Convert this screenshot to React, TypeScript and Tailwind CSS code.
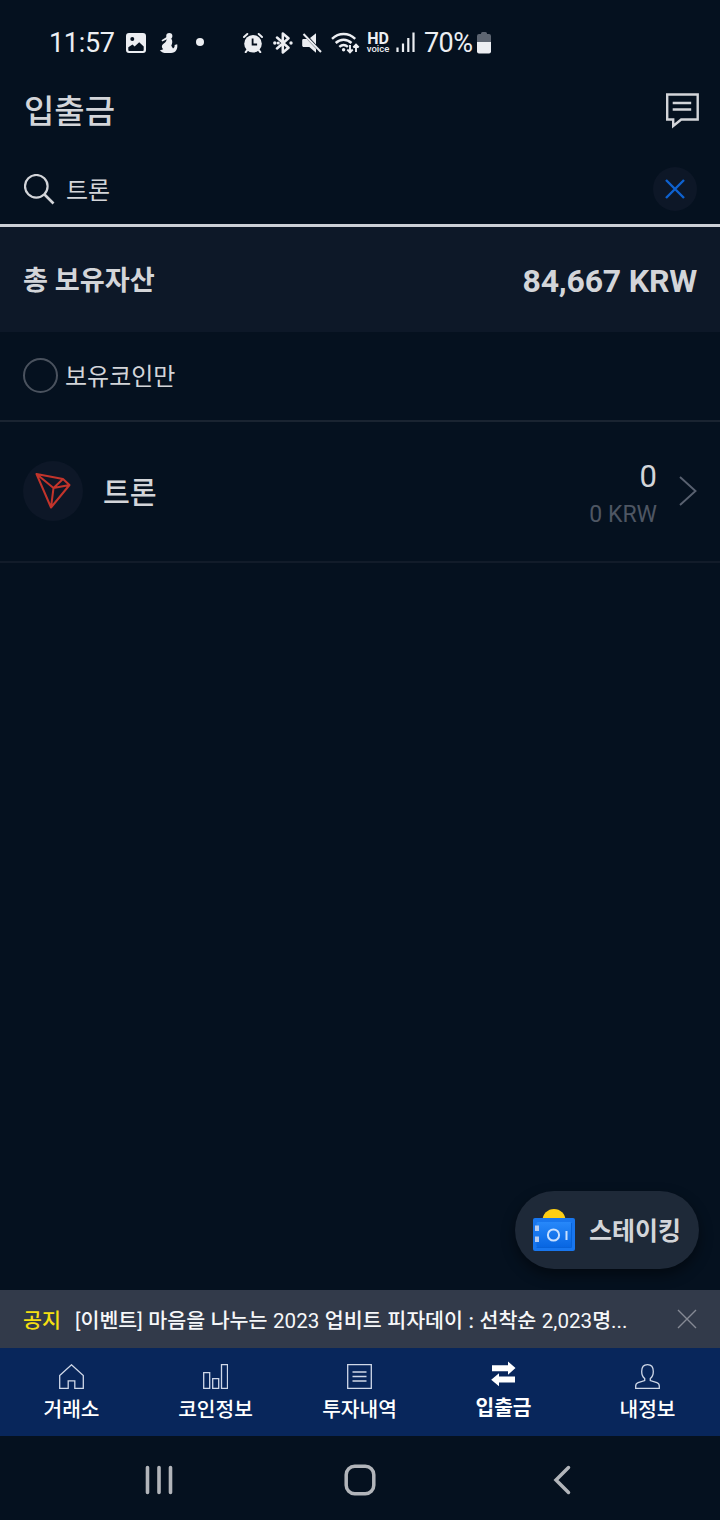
import type { ReactNode } from "react";

type IconProps = { box: string; className: string; children: ReactNode };

function Icon({ box, className, children }: IconProps) {
  return (
    <svg viewBox={box} className={`shrink-0 ${className}`} fill="none" stroke="currentColor" aria-hidden="true">
      {children}
    </svg>
  );
}

function StatusBar() {
  return (
    <div className="flex h-[83px] items-center pl-[49px] text-[#eceef2]">
      <span className="w-[76px] pt-[3px] text-[27px] leading-none tracking-[-0.3px]">11:57</span>
      <Icon box="0 0 20 20" className="ml-px mt-[2px] h-5 w-5">
        <path fill="currentColor" stroke="none" fillRule="evenodd" d="M3 0h14a3 3 0 0 1 3 3v14a3 3 0 0 1-3 3H3a3 3 0 0 1-3-3V3a3 3 0 0 1 3-3ZM2.300 14.300V17c0 .6.3.9.9.9h13.600c.6 0 .9-.3.9-.9v-3.500l-4.500-4.300-4.600 4.200-2.100-1.900-4.200 2.800ZM6.300 4a2 2 0 1 0 0 4 2 2 0 0 0 0-4Z" />
      </Icon>
      <Icon box="0 0 20 22" className="ml-[13px] mt-[2px] h-[22px] w-5">
        <g fill="currentColor" stroke="none">
          <circle cx="10.300" cy="4" r="3.100" />
          <path d="M2.500 8.300 8 4.800l1 1.900-5.700 2.700Z" />
          <path d="M7.800 6.500h4.400c1.600 2.600 1.300 4.600.1 7.200l1.700 2.800c1.500-.8 1.800-2 1.600-3.500l2.600-.8c.8 4.600-1.300 8.800-6.200 8.800H7.500c-2.800 0-5-.9-6.700-2.600l3.400-1.200c-1.700-1.600-1.700-3.400-.5-4.700 1.400-1.400 3.700-2 4.100-6Z" />
        </g>
      </Icon>
      <span className="ml-[17px] mt-px h-2 w-2 rounded-full bg-current" />
      <Icon box="0 0 20 20" className="ml-[39px] mt-[2px] h-5 w-5">
        <circle cx="10" cy="10.8" r="8.8" fill="currentColor" stroke="none" />
        <path d="m1 4 3.3-3M19 4l-3.3-3M4.2 17.2l-1.5 2M15.8 17.2l1.5 2" strokeWidth="2" strokeLinecap="round" />
        <path d="M9.6 5.5v6h4.5" stroke="#050f1d" strokeWidth="1.8" />
      </Icon>
      <Icon box="0 0 20 22" className="ml-[10px] mt-[2px] h-[22px] w-5">
        <path d="m4 5.500 11.500 10.300-5.700 4.700v-19l5.700 4.700L4 16.500" strokeWidth="2.500" strokeLinejoin="round" strokeLinecap="round" />
        <g fill="currentColor" stroke="none"><circle cx="1.800" cy="11" r="1.700" /><circle cx="18" cy="11" r="1.700" /><circle cx="5.200" cy="11" r="1.600" /></g>
      </Icon>
      <Icon box="0 0 20 20" className="ml-[9px] mt-[2px] h-5 w-5">
        <path fill="currentColor" stroke="none" d="M14 .2v11.2L8 5.1ZM1.8 6.1h3L14 15.8v4L7.3 14H1.8C.8 14 .2 13.4.2 12.5v-5c0-.9.6-1.4 1.6-1.4Z" />
        <path d="m1.5 1 17.5 18" strokeWidth="2" />
      </Icon>
      <Icon box="0 0 29 22" className="ml-[9px] mt-[2px] h-[22px] w-[29px]">
        <path d="M1 6.8c6.800-6.400 16.400-6.400 23.200 0M4.700 11c4.700-4.400 11.100-4.400 15.800 0M8.300 14.900c2.700-2.400 5.900-2.400 8.600 0" strokeWidth="2.400" />
        <circle cx="12.600" cy="17.800" r="1.700" fill="currentColor" stroke="none" />
        <path d="M19 13v7m-2.700-2.500L19 20.300l2.700-2.800M25 20v-7m-2.700 2.500L25 12.700l2.700 2.800" strokeWidth="1.900" />
      </Icon>
      <span className="ml-[6px] mt-[2px] flex w-[24px] flex-col items-center">
        <span className="text-[16px] font-bold leading-[12px]">HD</span>
        <span className="text-[9.500px] font-medium leading-[8px]">voice</span>
      </span>
      <Icon box="0 0 19 20" className="ml-[6px] h-5 w-[19px]">
        <path d="M1.500 20v-4.500M7 20v-8.500M12.300 20V6M17.500 20V.5" strokeWidth="2.200" />
      </Icon>
      <span className="ml-[9px] w-[53px] pt-[3px] text-[27px] leading-none tracking-[-0.6px]">70%</span>
      <Icon box="0 0 14 22" className="mt-[2px] h-[22px] w-[14px]">
        <path fill="#5d6571" stroke="none" d="M4 1.500Q4 0 5.500 0h3Q10 0 10 1.500V2h2q2 0 2 2v7H0V4q0-2 2-2h2Z" />
        <path fill="currentColor" stroke="none" d="M0 10h14v9.500q0 2-2 2H2q-2 0-2-2Z" />
      </Icon>
    </div>
  );
}

function Header() {
  return (
    <header className="flex h-[54px] items-center justify-between pl-6 pr-5">
      <h1 className="pt-[2px] text-[33px] font-medium leading-none">입출금</h1>
      <Icon box="0 0 34 36" className="mt-[2px] h-9 w-[34px]">
        <path d="M1.200 1.500h30.500v25H15.200L7.200 33v-6.500h-6ZM6.700 10h18.500M6.700 16.500h18.500" strokeWidth="2.400" />
      </Icon>
    </header>
  );
}

function SearchBar() {
  return (
    <div className="mt-[17px] flex h-[73px] items-center border-b-[3px] border-[#ccd0d6] pl-6 pr-[23px]">
      <Icon box="0 0 31 31" className="h-[31px] w-[31px]">
        <circle cx="12.300" cy="12.300" r="11.300" strokeWidth="2.200" />
        <path d="m20.500 20.500 9 9" strokeWidth="2.600" />
      </Icon>
      <span className="ml-[11px] flex-1 pt-[3px] text-[24px] leading-none">트론</span>
      <button className="flex h-11 w-11 items-center justify-center rounded-full bg-[#0d1727]" aria-label="지우기">
        <Icon box="0 0 20 20" className="h-5 w-5 text-[#0e62d0]">
          <path d="m1 1 18 18M19 1 1 19" strokeWidth="2.400" />
        </Icon>
      </button>
    </div>
  );
}

function CoinRow() {
  return (
    <div className="flex h-[141px] items-center border-b-2 border-[#121c2a] pb-[2px] pl-[23px] pr-[23px]">
      <span className="flex h-[60px] w-[60px] items-center justify-center rounded-full bg-[#0d1727]">
        <Icon box="0 0 36 38" className="mr-px h-[38px] w-9 text-[#c2342b]">
          <path d="M1.500 2 28 7l6.500 6L16 35.500ZM1.500 2 18.500 16 28 7M18.500 16l16-3M18.500 16 16 35.500" strokeWidth="2" strokeLinejoin="round" />
        </Icon>
      </span>
      <span className="ml-5 flex-1 pt-[6px] text-[29.200px] font-medium leading-none">트론</span>
      <span className="flex flex-col items-end pt-[10px]">
        <span className="text-[31px] leading-[38px]">0</span>
        <span className="text-[23px] leading-[38px] text-[#4e5663]">0 KRW</span>
      </span>
      <Icon box="0 0 18 30" className="ml-[22px] h-[30px] w-[18px] text-[#596170]">
        <path d="m1 1 15.500 14L1 29" strokeWidth="1.900" />
      </Icon>
    </div>
  );
}

function StakingButton() {
  return (
    <button className="absolute bottom-[21px] right-[21px] flex h-[78px] w-[184px] items-center rounded-full bg-[#1e2938] pl-[18px] shadow-[0_6px_14px_rgba(0,0,0,0.45)]">
      <svg viewBox="0 0 42 42" className="h-[42px] w-[42px] shrink-0" aria-hidden="true">
        <defs>
          <linearGradient id="safe" x1="0" y1="0" x2="0" y2="1">
            <stop offset="0" stopColor="#2788fa" />
            <stop offset="1" stopColor="#0866e2" />
          </linearGradient>
        </defs>
        <circle cx="21" cy="11.500" r="11.500" fill="#fdce14" />
        <rect y="9" width="42" height="33" rx="2" fill="#1876ee" />
        <rect x="3.500" y="13" width="35" height="25" rx="1.500" fill="url(#safe)" />
        <path d="M3.500 38.500h35V14" fill="none" stroke="#0862d8" strokeWidth="1" />
        <path d="M2 16.500h4v5.500H2ZM2 27.500h4V33H2Z" fill="#b9cdf0" />
        <circle cx="20.500" cy="26" r="5.600" fill="none" stroke="#c9e0ff" strokeWidth="2" />
        <path d="M33.500 22v9" stroke="#c9e0ff" strokeWidth="2" />
      </svg>
      <span className="ml-[14px] pt-[3px] text-[25px] font-bold leading-none">스테이킹</span>
    </button>
  );
}

function NoticeBar() {
  return (
    <div className="flex h-[58px] items-center bg-[#323a4a] pl-[23px] pr-[23px] text-[20.600px] font-medium leading-none">
      <span className="w-[52px] pt-[4px] text-[#f5df12]">공지</span>
      <span className="w-[560px] whitespace-nowrap pt-[4px] text-[#f6f7f9] [word-spacing:0.4px]">
        <span className="font-normal">[</span>이벤트<span className="font-normal">]</span> 마음을 나누는 <span className="font-normal">2023</span> 업비트 피자데이 : 선착순 <span className="font-normal">2,023</span>명<span className="font-normal">...</span>
      </span>
      <Icon box="0 0 20 20" className="ml-auto h-5 w-5 text-[#858994]">
        <path d="m1 1 18 18M19 1 1 19" strokeWidth="1.400" />
      </Icon>
    </div>
  );
}

const tabs = [
  { label: "거래소", icon: <path d="M.7 11.500 12.500.8l11.800 10.700v12.800h-8.500v-7.500H9.200v7.500H.7Z" /> },
  { label: "코인정보", icon: <path d="M.7 8.700h6v15.600h-6ZM9.700 14.700h6v9.600h-6ZM18.500.7h6v23.600h-6Z" /> },
  { label: "투자내역", icon: <path d="M.7.7h23.600v23.600H.7ZM5.500 8h14M5.500 12.500h14M5.500 17h14" /> },
  { label: "입출금", active: true, icon: <path fill="currentColor" stroke="none" d="M1 3.200h16V-.5l7.500 6.600-7.500 6.600V9.200H1ZM24 14.500H8v-3.200L.2 17.700 8 24.200v-3.700h16Z" /> },
  { label: "내정보", icon: <path d="M12.500.7c4.200 0 5.800 3 5.800 6.700 0 3.300-1.300 5.700-3 7.100v2l6.600 2.100c1.700.6 2.400 1.700 2.400 3.400v2.300H.7V22c0-1.700.7-2.800 2.400-3.400l6.600-2.100v-2c-1.700-1.400-3-3.800-3-7.100 0-3.700 1.600-6.700 5.800-6.700Z" /> },
];

function TabBar() {
  return (
    <nav className="grid h-[88px] grid-cols-5 bg-[#08265b] text-white">
      {tabs.map((tab) => (
        <div key={tab.label} className="flex flex-col items-center pr-px pt-4">
          <Icon box="0 0 25 25" className={tab.active ? "-mt-[2px] h-[25px] w-[25px] overflow-visible" : "h-[25px] w-[25px] text-[#cfd8e8]"}>
            <g strokeWidth="1.300">{tab.icon}</g>
          </Icon>
          <span className={tab.active ? "mt-[11px] text-[20.300px] font-bold leading-[20px]" : "mt-[11px] text-[20.300px] font-medium leading-[20px]"}>{tab.label}</span>
        </div>
      ))}
    </nav>
  );
}

function SystemNav() {
  return (
    <div className="flex h-[84px] items-center pl-[145px] pr-[149px] pt-[4px] text-[#b2b5ba]">
      <Icon box="0 0 28 30" className="h-[30px] w-7">
        <path d="M2.500 2.500v25M14 2.500v25M25.500 2.500v25" strokeWidth="3.600" strokeLinecap="round" />
      </Icon>
      <Icon box="0 0 32 32" className="ml-[171px] h-8 w-8">
        <rect x="2.200" y="2.200" width="27.600" height="27.600" rx="8.500" strokeWidth="3.500" />
      </Icon>
      <Icon box="0 0 18 30" className="ml-auto h-[30px] w-[18px]">
        <path d="M15.500 2.500 3 15l12.500 12.500" strokeWidth="3.500" strokeLinecap="round" />
      </Icon>
    </div>
  );
}

export default function App() {
  return (
    <div className="flex h-[1520px] w-[720px] flex-col overflow-hidden bg-[#05111f] font-[Roboto,'Noto_Sans_CJK_KR',sans-serif] text-[#d3d5d9]" lang="ko">
      <StatusBar />
      <Header />
      <SearchBar />
      <section className="flex h-[105px] items-center justify-between bg-[#0d1828] px-[23px] font-bold leading-none">
        <span className="pt-[5px] text-[27.200px]">총 보유자산</span>
        <span className="pt-[3px] text-[32px] tracking-[-0.2px]">84,667 KRW</span>
      </section>
      <label className="flex h-[90px] items-center border-b-2 border-[#1a2431] pl-[23px] text-[24px] leading-none">
        <span className="mb-[2px] mr-[7px] h-[35px] w-[35px] rounded-full border-2 border-[#4a525e]" />
        <span className="pt-[2px]">보유코인만</span>
      </label>
      <CoinRow />
      <main className="relative flex-1">
        <StakingButton />
      </main>
      <NoticeBar />
      <TabBar />
      <SystemNav />
    </div>
  );
}
